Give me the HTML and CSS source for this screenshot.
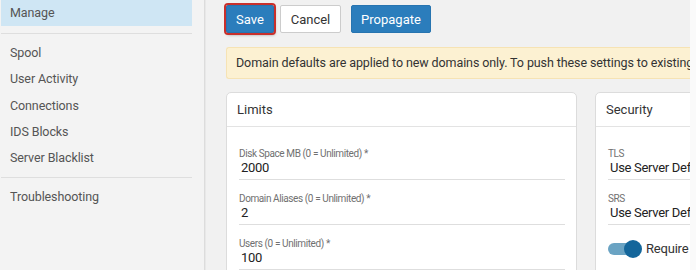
FILE: index.html
```html
<!DOCTYPE html>
<html lang="en">
<head>
    <meta charset="UTF-8">
    <title>Domain Defaults</title>
    <link rel="stylesheet" href="styles.css">
</head>
<body>
    <div class="layout">
        <nav class="sidebar">
            <ul class="nav-list">
                <li class="nav-item active">Manage</li>
            </ul>
            <ul class="nav-list">
                <li class="nav-item">Spool</li>
                <li class="nav-item">User Activity</li>
                <li class="nav-item">Connections</li>
                <li class="nav-item">IDS Blocks</li>
                <li class="nav-item">Server Blacklist</li>
            </ul>
            <ul class="nav-list">
                <li class="nav-item">Troubleshooting</li>
            </ul>
        </nav>

        <main class="main">
            <div class="toolbar">
                <button class="btn btn-primary btn-focus">Save</button>
                <button class="btn btn-default">Cancel</button>
                <button class="btn btn-primary btn-wide">Propagate</button>
            </div>

            <div class="alert">Domain defaults are applied to new domains only. To push these settings to existing domains, use Propagate.</div>

            <div class="cards">
                <section class="card">
                    <div class="card-header">Limits</div>
                    <div class="card-body">
                        <div class="field">
                            <div class="field-label">Disk Space MB (0 = Unlimited) *</div>
                            <div class="field-value">2000</div>
                        </div>
                        <div class="field">
                            <div class="field-label">Domain Aliases (0 = Unlimited) *</div>
                            <div class="field-value">2</div>
                        </div>
                        <div class="field">
                            <div class="field-label">Users (0 = Unlimited) *</div>
                            <div class="field-value">100</div>
                        </div>
                    </div>
                </section>

                <section class="card">
                    <div class="card-header">Security</div>
                    <div class="card-body">
                        <div class="field">
                            <div class="field-label">TLS</div>
                            <div class="field-value">Use Server Default</div>
                        </div>
                        <div class="field">
                            <div class="field-label">SRS</div>
                            <div class="field-value">Use Server Default</div>
                        </div>
                        <div class="toggle-row">
                            <span class="toggle"><span class="knob"></span></span>
                            <span class="toggle-text">Require SMTP authentication</span>
                        </div>
                    </div>
                </section>
            </div>
        </main>
        <div class="edge"></div>
    </div>
</body>
</html>
```

FILE: styles.css
```css
body {
    margin: 0;
    font-family: Roboto, "Liberation Sans", Arial, sans-serif;
    background-color: #f1f1f1;
    color: #333;
    overflow: hidden;
}

.layout {
    display: flex;
    height: 270px;
}

.sidebar {
    width: 191px;
    flex-shrink: 0;
    padding: 0 12px 0 1px;
    background-color: #f3f3f3;
    border-right: 1px solid #dcdcdc;
    box-shadow: 1px 0 0 #e8e8e8;
}

.nav-list {
    list-style: none;
    margin: 0 0 6px;
    padding: 0 0 6px;
    border-bottom: 1px solid #dedede;
}

.nav-list:first-child {
    padding-bottom: 7px;
}

.nav-list:last-child {
    border-bottom: none;
}

.nav-item {
    font-size: 12.5px;
    letter-spacing: -0.1px;
    color: #555;
    padding: 0 9px;
    line-height: 26.3px;
}

.nav-list:first-child .nav-item {
    line-height: 26px;
}

.nav-item.active {
    background-color: #cfe6f4;
}

.main {
    flex: 1;
    min-width: 0;
    overflow: hidden;
    padding-left: 20px;
    margin-left: 1px;
}

.toolbar {
    display: flex;
    align-items: center;
    padding-top: 5px;
    height: 28px;
}

.btn {
    font-family: inherit;
    font-size: 13px;
    height: 28px;
    padding: 0;
    border-radius: 2px;
    border: 1px solid #ccc;
    cursor: pointer;
}

.btn-primary {
    background-color: #2b7dbc;
    border-color: #2774b0;
    color: #fff;
}

.btn-focus {
    width: 48px;
    outline: 2px solid #c9302c;
    box-shadow: 1px 2px 3px rgba(0, 0, 0, 0.35);
}

.btn-default {
    background-color: #fff;
    color: #333;
    width: 61px;
    margin-left: 6px;
}

.btn-wide {
    width: 80px;
    margin-left: 10px;
}

.alert {
    margin-top: 14px;
    height: 30px;
    line-height: 30px;
    padding-left: 9px;
    background-color: #fcf1d2;
    border: 1px solid #f6e3b4;
    border-right: none;
    border-radius: 3px 0 0 3px;
    font-size: 12.5px;
    letter-spacing: -0.1px;
    color: #333;
    white-space: nowrap;
    overflow: hidden;
}

.cards {
    display: flex;
    gap: 18px;
    margin-top: 13px;
}

.card {
    width: 349px;
    height: 200px;
    flex-shrink: 0;
    background-color: #fff;
    border: 1px solid #dcdcdc;
    border-radius: 5px;
}

.card-header {
    height: 33px;
    line-height: 33px;
    padding-left: 10px;
    font-size: 13px;
    color: #333;
    border-bottom: 1px solid #e3e3e3;
}

.card-body {
    padding: 20px 12px 0;
}

.field {
    width: 326px;
    border-bottom: 1px solid #dedede;
    margin-bottom: 12px;
}

.field-label {
    font-size: 10px;
    letter-spacing: -0.4px;
    line-height: 13px;
    color: #707070;
}

.field-value {
    font-size: 13px;
    letter-spacing: -0.3px;
    line-height: 16px;
    color: #222;
    padding: 0 0 3px 2px;
    white-space: nowrap;
}

.toggle-row {
    display: flex;
    align-items: center;
    gap: 8px;
    margin-top: 16px;
}

.toggle {
    position: relative;
    width: 30px;
    height: 12px;
    border-radius: 6px;
    background-color: #6aa3c3;
}

.knob {
    position: absolute;
    right: -4px;
    top: -3px;
    width: 18px;
    height: 18px;
    border-radius: 50%;
    background-color: #14669b;
}

.toggle-text {
    font-size: 13px;
    letter-spacing: -0.2px;
    color: #333;
    white-space: nowrap;
}

.edge {
    width: 6px;
    flex-shrink: 0;
    background-color: #fafafa;
}
```
